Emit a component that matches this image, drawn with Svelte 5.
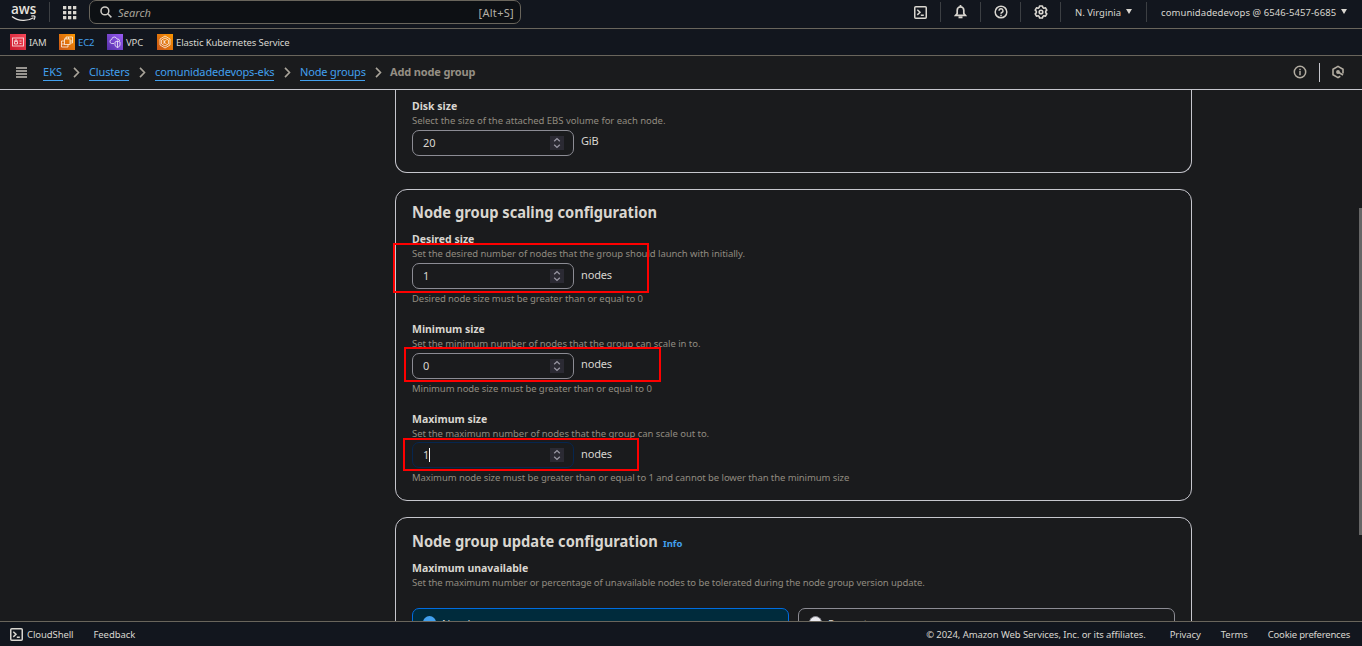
<script>
  const crumbs = [
    { label: 'EKS', w: 20 },
    { label: 'Clusters', w: 40 },
    { label: 'comunidadedevops-eks', w: 119 },
    { label: 'Node groups', w: 65 }
  ];
  const fields = [
    { label: 'Desired size', desc: 'Set the desired number of nodes that the group should launch with initially.', value: '1', hint: 'Desired node size must be greater than or equal to 0' },
    { label: 'Minimum size', desc: 'Set the minimum number of nodes that the group can scale in to.', value: '0', hint: 'Minimum node size must be greater than or equal to 0' },
    { label: 'Maximum size', desc: 'Set the maximum number of nodes that the group can scale out to.', value: '1', hint: 'Maximum node size must be greater than or equal to 1 and cannot be lower than the minimum size', focused: true }
  ];
</script>

{#snippet shell()}
  <svg width="13" height="13" viewBox="0 0 13 13" fill="none" stroke="currentColor" stroke-width="1.5"><rect x=".75" y=".75" width="11.5" height="11.5" rx="1" /><path d="M3.3 3.7l2.7 2.6-2.7 2.6M6.8 9.3h3" /></svg>
{/snippet}

{#snippet numberField(value, unit, focused)}
  <div class="control">
    <div class="input" class:focused>
      <span class="value">{value}</span>{#if focused}<i class="caret"></i>{/if}
      <span class="spin"><svg width="14" height="14" viewBox="0 0 14 14" fill="none" stroke="#9896a3" stroke-width="1.3"><path d="M4.2 5.3L7 2.6l2.8 2.7M4.2 8.7L7 11.4l2.8-2.7" /></svg></span>
    </div>
    <span class="unit">{unit}</span>
  </div>
{/snippet}

<div class="page">
  <header class="top">
    <div class="logo"><span class="aws">aws</span><svg width="26" height="8" viewBox="0 0 26 8"><path d="M1 1.400c6.500 5 15.500 5 21.500 1.300M20.300 1.200c3.500-.7 4.700-.2 2.600 3.600" fill="none" stroke="#e6e3de" stroke-width="1.300" /></svg></div>
    <i class="sep"></i>
    <svg class="apps" width="14" height="14" viewBox="0 0 14 14" fill="#d9d6d0">
      {#each [0, 5, 10] as y}{#each [0, 5, 10] as x}<rect {x} {y} width="3.300" height="3.300" />{/each}{/each}
    </svg>
    <div class="search">
      <svg width="12" height="12" viewBox="0 0 12 12" fill="none" stroke="#cfccc6" stroke-width="1.500"><circle cx="4.900" cy="4.900" r="3.900" /><path d="M7.800 7.800l3.600 3.600" /></svg>
      <em>Search</em><span class="key">[Alt+S]</span>
    </div>
    <div class="tools">
      <div class="tool">{@render shell()}</div>
      <div class="tool"><svg width="13" height="14" viewBox="0 0 13 14" fill="none" stroke="currentColor" stroke-width="1.700"><path d="M3.200 8.500V5.200a3.300 3.300 0 0 1 6.600 0v3.300l1.600 1.900H1.600zM6.500 0v2" /><path d="M4.500 12.300h4" stroke-width="2" /></svg></div>
      <div class="tool"><svg width="14" height="14" viewBox="0 0 14 14" fill="none" stroke="currentColor" stroke-width="1.500"><circle cx="7" cy="7" r="5.800" /><path d="M5 5.700a2 2 0 1 1 2.900 1.800Q7 8 7 8.800M7 9.800v1.400" /></svg></div>
      <div class="tool gear"><svg width="14" height="14" viewBox="0 0 14 14" fill="none" stroke="currentColor" stroke-width="1.600" stroke-linejoin="round"><path d="M5.600 1h2.800l.5 1.600 1 .6 1.600-.4 1.300 2.300L11.700 6.300v1.400l1.100 1.200-1.300 2.300-1.600-.4-1 .6-.5 1.600H5.600l-.5-1.600-1-.6-1.600.4-1.300-2.300 1.100-1.200V6.300L1.200 5.100l1.300-2.300 1.600.4 1-.6z" /><circle cx="7" cy="7" r="1.800" /></svg></div>
      <div class="region"><span>N. Virginia</span><i class="tri"></i></div>
      <div class="account"><span>comunidadedevops @ 6546-5457-6685</span><i class="tri"></i></div>
    </div>
  </header>

  <nav class="favs">
    <a class="fav iam"><svg class="red" width="16" height="16" viewBox="0 0 16 16"><rect x="2.500" y="4" width="11" height="8" /><path d="M4.500 7.500h3v2.500h-3zM5 7V6h2v1M9.500 7h2M9.500 9.500h2" /></svg><span>IAM</span></a>
    <a class="fav ec2"><svg class="orange" width="16" height="16" viewBox="0 0 16 16"><rect x="5.500" y="5" width="5.500" height="5.500" /><path d="M7 5V3h6.500v6H11M9 10.500v2.500H2.500V7h3M7 3.500v1M9.500 3v2M11 7h2.500M3 10h2.500" /></svg><span>EC2</span></a>
    <a class="fav vpc"><svg class="purple" width="16" height="16" viewBox="0 0 16 16"><path d="M7 9.500H4.500Q2.500 9 3 7q.3-1.400 1.700-1.500Q5 3 7.300 3q2 0 2.700 2 2.500-.3 2.700 2M10.500 7l2.500 1v3q0 1.500-2.500 2.500Q8 12.500 8 11V8zM10.500 7v6.500" /></svg><span>VPC</span></a>
    <a class="fav eks"><svg class="orange" width="16" height="16" viewBox="0 0 16 16"><path d="M8 2l5 3v6l-5 3-5-3V5z" /><path d="M8 4l3.400 2v4L8 12l-3.400-2V6zM7 6v4M9.500 6L7 8l2.500 2" /></svg><span>Elastic Kubernetes Service</span></a>
  </nav>

  <nav class="crumbs">
    <svg class="burger" width="11" height="11" viewBox="0 0 11 11" stroke="#c4c0b8" stroke-width="1.300"><path d="M0 1h11M0 4h11M0 7h11M0 10h11" /></svg>
    {#each crumbs as c}
      <a style:width="{c.w}px">{c.label}</a>
      <svg class="chev" width="7" height="11" viewBox="0 0 7 11" fill="none" stroke="#a9a49a" stroke-width="1.600"><path d="M1 .9l4.500 4.600L1 10.100" /></svg>
    {/each}
    <b>Add node group</b>
    <div class="panels">
      <svg width="14" height="14" viewBox="0 0 14 14" fill="none" stroke="currentColor" stroke-width="1.500"><circle cx="7" cy="7" r="5.700" /><path d="M7 3.800v1.400M7 6v4.300" /></svg>
      <i></i>
      <svg width="14" height="14" viewBox="0 0 14 14" fill="none" stroke="currentColor" stroke-width="1.600"><path d="M12 8.500V4.200L7 1.400 2 4.200v5.600l5 2.800 2.300-1.300" /><path d="M7 7l5 3" /><circle cx="7" cy="7" r="1.100" /></svg>
    </div>
  </nav>

  <main>
    <section class="card disk">
      <div class="field raised">
        <div class="label">Disk size</div>
        <div class="desc wide">Select the size of the attached EBS volume for each node.</div>
        {@render numberField('20', 'GiB', false)}
      </div>
    </section>
    <section class="card scaling">
      <h2><span class="title">Node group scaling configuration</span></h2>
      {#each fields as f, n}
        <div class="field" class:raised={n === 1} class:last={n === 2}>
          <div class="label">{f.label}</div>
          <div class="desc">{f.desc}</div>
          {@render numberField(f.value, 'nodes', f.focused)}
          <div class="desc hint">{f.hint}</div>
        </div>
      {/each}
    </section>
    <section class="card update">
      <h2><span class="title">Node group update configuration</span><a class="info">Info</a></h2>
      <div class="label">Maximum unavailable</div>
      <div class="desc tight">Set the maximum number or percentage of unavailable nodes to be tolerated during the node group version update.</div>
      <div class="tiles">
        <div class="tile on"><i class="radio"></i><span>Number</span></div>
        <div class="tile"><i class="radio"></i><span>Percentage</span></div>
      </div>
    </section>
    <div class="mark m1"></div>
    <div class="mark m2"></div>
    <div class="mark m3"></div>
    <div class="thumb"></div>
  </main>

  <footer>
    <span class="shell">{@render shell()}<span>CloudShell</span></span>
    <span class="feedback">Feedback</span>
    <span class="copy">© 2024, Amazon Web Services, Inc. or its affiliates.</span>
    <span class="privacy">Privacy</span>
    <span class="terms">Terms</span>
    <span class="cookie">Cookie preferences</span>
  </footer>
</div>

<style>
  :global(body) { margin: 0; background: #1a1b1d; overflow: hidden; }
  .page { width: 1362px; height: 646px; overflow: hidden; display: flex; flex-direction: column; background: #1a1b1d; color: #d9d6d0; font: 11px/15px "Noto Sans", sans-serif; box-sizing: border-box; }
  .page *, .page { box-sizing: border-box; }
  .page span, .page a, .page b, .page em { white-space: nowrap; }
  svg, i { display: block; flex: none; }
  .top { height: 29px; flex: none; background: #12161e; border-bottom: 1px solid #69655c; display: flex; align-items: flex-start; padding-left: 11px; }
  .logo { width: 26px; }
  .aws { display: block; height: 15px; font: 600 13.500px/18px "Open Sans", sans-serif; color: #e6e3de; }
  .sep { width: 1px; height: 20px; margin: 2px 0 0 12px; background: #3c3f43; }
  .apps { margin: 6px 0 0 13px; }
  .search { width: 432px; height: 24px; margin-left: 12px; border: 1px solid #69655c; border-radius: 7px; background: #0d1014; display: flex; align-items: center; padding: 0 6px 0 10px; }
  .search em { margin-left: 6px; color: #a9a49a; }
  .key { margin-left: auto; color: #b3afa7; font-size: 11px; letter-spacing: .3px; }
  .tools { margin-left: auto; display: flex; align-items: center; height: 24px; font-size: 9.500px; }
  .tool, .region { height: 20px; display: flex; align-items: center; justify-content: center; border-right: 1px solid #3c3f43; }
  .tool { width: 40px; }
  .gear { padding-bottom: 1px; }
  .region { width: 86px; }
  .account { width: 215px; display: flex; align-items: center; padding-left: 14px; letter-spacing: .08px; }
  .tri { width: 0; height: 0; border: solid transparent; border-width: 5px 3.500px 0; border-top-color: #d9d6d0; margin: -1px 0 0 5px; }
  .favs { height: 27px; flex: none; display: flex; align-items: center; padding-left: 10px; border-bottom: 1px solid #69655c; background: #12161e; font-size: 9.500px; letter-spacing: -.1px; }
  .fav { display: flex; align-items: center; gap: 3px; }
  .fav svg { fill: none; stroke: #fff; stroke-width: .9; stroke-opacity: .8; }
  .red { background: linear-gradient(45deg, #c9182c, #f4485a); }
  .orange { background: linear-gradient(45deg, #c95417, #fa9500); }
  .purple { background: linear-gradient(45deg, #5530a8, #9a5cf4); }
  .iam { width: 49px; }
  .ec2 { width: 48px; color: #42a0ee; }
  .vpc { width: 50px; }
  .crumbs { height: 34px; flex: none; display: flex; align-items: center; padding-left: 16px; border-bottom: 1px solid #c6c6cd; letter-spacing: -.15px; }
  .burger { margin-right: 16px; }
  .crumbs a { height: 16px; line-height: 14px; color: #42a0ee; border-bottom: 1px solid #42a0ee; }
  .crumbs a:first-of-type { letter-spacing: .1px; }
  .chev { margin: 0 9px 0 10px; }
  .crumbs b { color: #958f84; padding-bottom: 2px; margin-left: -1px; }
  .panels { margin-left: auto; margin-right: 17px; display: flex; align-items: center; color: #b3ada2; padding-bottom: 1px; }
  .panels i { width: 1px; height: 19px; margin: 0 11px 0 12px; background: #c6c6cd; }
  main { position: relative; height: 531px; flex: none; overflow: hidden; padding-left: 395px; }
  .card { width: 797px; border: 1px solid #c6c6cd; border-radius: 12px; padding: 12px 16px 0; }
  .disk { height: 83px; border-top: 0; border-radius: 0 0 12px 12px; padding-top: 9px; }
  .scaling { height: 312px; margin-top: 16px; }
  .update { height: 180px; margin-top: 16px; padding-top: 13px; }
  h2 { display: flex; align-items: baseline; margin: 0; height: 30px; font-size: 16px; line-height: 21px; font-weight: 700; }
  .title { width: 251px; transform: scaleX(.917); transform-origin: left; }
  .info { font-size: 9.500px; color: #42a0ee; }
  .label { height: 15px; line-height: 15px; font-weight: 700; font-size: 10.500px; white-space: nowrap; }
  .desc { height: 14px; line-height: 14px; font-size: 9.500px; letter-spacing: -.05px; color: #918b80; white-space: nowrap; }
  .desc.wide { letter-spacing: -.02px; }
  .desc.tight { letter-spacing: -.083px; }
  .control { display: flex; margin-top: 2px; height: 26px; }
  .input { width: 162px; height: 26px; border: 1px solid #8c8c94; border-radius: 7px; display: flex; align-items: center; padding: 0 9px 0 10px; }
  .input.focused { border-color: #06264f; }
  .value { padding-bottom: 1px; }
  .caret { width: 1px; height: 14px; background: #fff; }
  .spin { margin-left: auto; background: #2b2a33; }
  .unit { margin-left: 7px; line-height: 23px; letter-spacing: -.15px; }
  .raised .unit { line-height: 21px; }
  .desc.hint { margin-top: 3px; letter-spacing: -.08px; }
  .scaling .field { height: 90px; }
  .last .control { margin-top: 1px; }
  .tiles { display: flex; gap: 9px; margin-top: 18px; }
  .tile { width: 377px; height: 70px; border: 1px solid #8c8c94; border-radius: 7px; padding: 7px 10px; display: flex; gap: 6px; }
  .tile.on { background: #002b3c; border-color: #006ce0; }
  .radio { width: 13px; height: 13px; border-radius: 50%; background: #ebebf0; border: 1px solid #8c8c94; }
  .on .radio { background: #42a0ee; border: 0; }
  .mark { position: absolute; border: 2px solid #fe0000; }
  .m1 { left: 393px; top: 153px; width: 256px; height: 50px; }
  .m2 { left: 404px; top: 257px; width: 257px; height: 35px; }
  .m3 { left: 403px; top: 348px; width: 236px; height: 33px; }
  .thumb { position: absolute; left: 1359px; top: 118px; width: 3px; height: 327px; background: #666; }
  footer { height: 25px; flex: none; border-top: 1px solid #69655c; background: #12161e; display: flex; align-items: center; padding: 0 12px 0 10px; font-size: 9.500px; letter-spacing: -.08px; }
  .shell { display: flex; align-items: center; gap: 4px; }
  .feedback { margin-left: 20px; }
  .copy { margin-left: auto; }
  .privacy { margin-left: 24px; }
  .terms { margin-left: 20px; }
  .cookie { margin-left: 20px; letter-spacing: -.2px; }
</style>
